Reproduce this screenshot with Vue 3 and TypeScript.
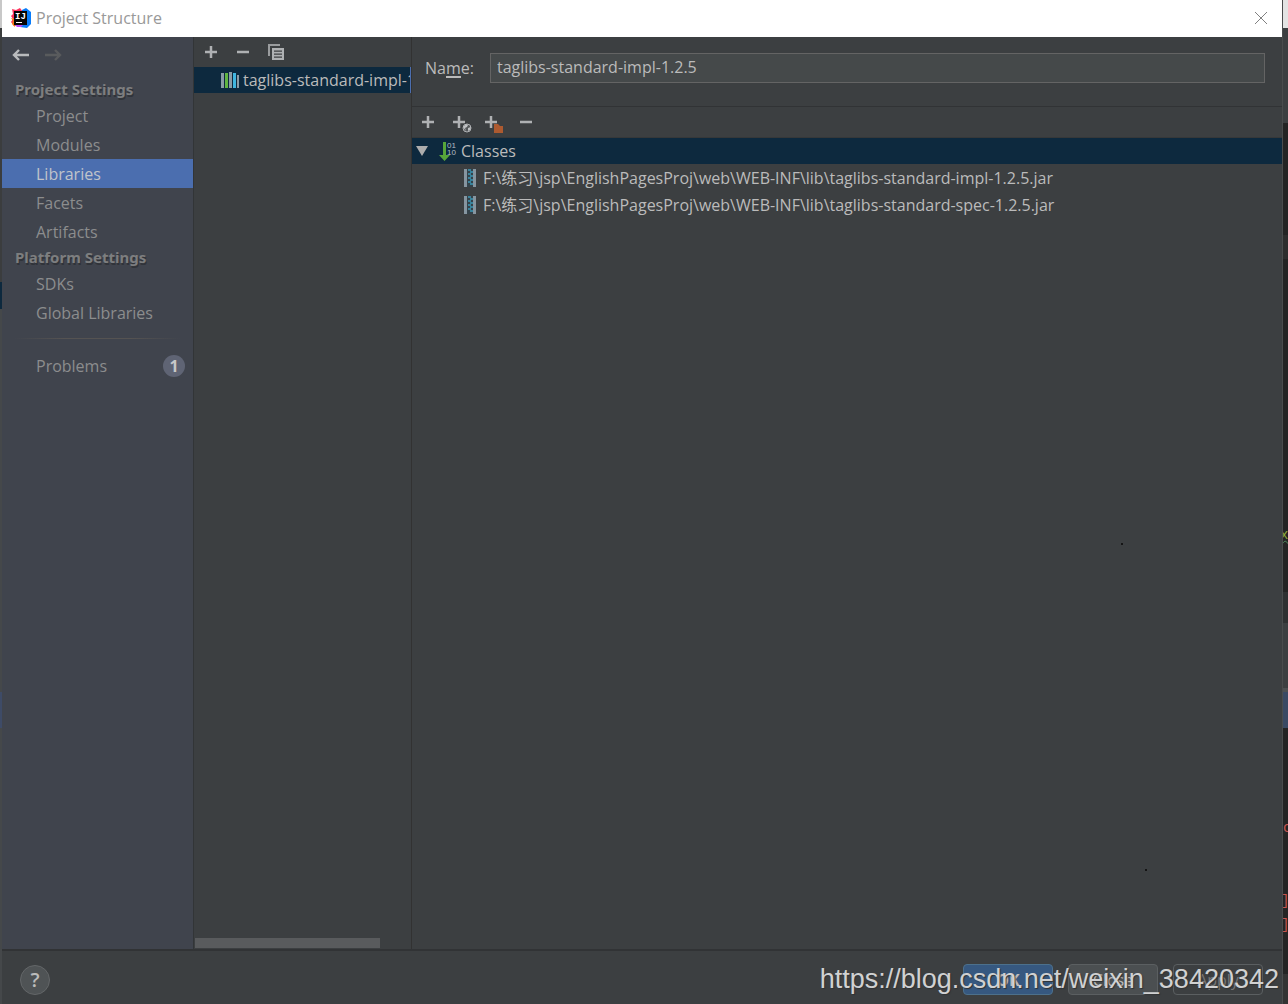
<script setup lang="ts">
import { ref } from 'vue'

interface NavGroup {
  title: string
  items: string[]
}

const groups: NavGroup[] = [
  { title: 'Project Settings', items: ['Project', 'Modules', 'Libraries', 'Facets', 'Artifacts'] },
  { title: 'Platform Settings', items: ['SDKs', 'Global Libraries'] },
]
const active = ref('Libraries')
const name = ref('taglibs-standard-impl-1.2.5')
const root = 'F:\\练习\\jsp\\EnglishPagesProj\\web\\WEB-INF\\lib\\'
const jars: string[] = ['taglibs-standard-impl-1.2.5.jar', 'taglibs-standard-spec-1.2.5.jar']
const zipRows: number[] = [0, 1, 2, 3, 4, 5, 6, 7]
</script>

<template>
  <div class="desktop">
    <div class="edge edge-left"></div>
    <main class="dialog">
      <header class="titlebar">
        <svg class="logo" width="20" height="20" viewBox="0 0 20 20" aria-hidden="true">
          <path d="M1 1l4 1 4-2 3 4-3 13-6 1L0 14l2-3-2-3 2-2z" fill="#fe315d" />
          <path d="M0 10l4 1v8L1 16l1-3z" fill="#f97a12" />
          <path d="M11 2 15 0l5 4v12l-4 4-7-1z" fill="#087cfa" />
          <path d="M4 17h8l-2 2H6z" fill="#b74af7" />
          <rect x="3" y="3" width="13" height="14" fill="#050505" />
          <text x="4" y="11" font-family="Liberation Mono, monospace" font-size="9" font-weight="700" fill="#fff">IJ</text>
          <path d="M5 14.500h6" stroke="#fff" />
        </svg>
        <h1>Project Structure</h1>
        <button class="close" aria-label="Close window">
          <svg width="12" height="12" viewBox="0 0 12 12"><path d="M0 0 12 12M12 0 0 12" stroke="#808080" /></svg>
        </button>
      </header>

      <div class="body">
        <nav class="sidebar">
          <div class="history">
            <button aria-label="Back">
              <svg width="18" height="14" viewBox="0 0 18 14"><path d="M17 7H2M7 2 2 7l5 5" fill="none" stroke="#b9bbbd" stroke-width="2.400" /></svg>
            </button>
            <button aria-label="Forward" disabled>
              <svg width="18" height="14" viewBox="0 0 18 14"><path d="M0 7h15M10 2l5 5-5 5" fill="none" stroke="#595b5d" stroke-width="2.400" /></svg>
            </button>
          </div>
          <section v-for="g in groups" :key="g.title">
            <h2>{{ g.title }}</h2>
            <a v-for="i in g.items" :key="i" href="#" :class="{ active: i === active }" @click.prevent="active = i">{{ i }}</a>
          </section>
          <hr />
          <a href="#" class="problems" @click.prevent="active = 'Problems'">Problems<span class="badge">1</span></a>
        </nav>

        <section class="libraries">
          <div class="tools">
            <button aria-label="Add library">
              <svg width="14" height="14" viewBox="0 0 14 14"><path d="M7 1v12M1 7h12" stroke="#afb1b3" stroke-width="2.500" /></svg>
            </button>
            <button aria-label="Remove library">
              <svg width="14" height="14" viewBox="0 0 14 14"><path d="M1 7h12" stroke="#afb1b3" stroke-width="2.500" /></svg>
            </button>
            <button aria-label="Copy library">
              <svg width="16" height="16" viewBox="0 0 16 16">
                <path d="M1 12V1h11" fill="none" stroke="#9a9c9e" stroke-width="2" />
                <path d="M4 4h12v12H4zM6 6.500v1.300h8v-1.300zM6 9.500v1.300h8v-1.300zM6 12.500v1.300h8v-1.300z" fill="#afb1b3" fill-rule="evenodd" />
              </svg>
            </button>
          </div>
          <div class="library">
            <svg width="18" height="18" viewBox="0 0 18 18" aria-hidden="true">
              <path d="M0 2h3v15H0zM8 1h3v16H8zM16 4h2v13h-2z" fill="#8b9ba6" />
              <path d="M4 2h3v15H4z" fill="#62b543" />
              <path d="M12 2h3v15h-3z" fill="#40b6e0" />
            </svg>
            <span>{{ name }}</span>
          </div>
          <div class="scrollbar"></div>
        </section>

        <section class="detail">
          <div class="form">
            <label for="library-name">Na<span class="mnemonic">m</span>e:</label>
            <input id="library-name" v-model="name" type="text" />
          </div>
          <div class="tools roots">
            <button aria-label="Add">
              <svg width="14" height="14" viewBox="0 0 14 14"><path d="M7 1v12M1 7h12" stroke="#afb1b3" stroke-width="2.500" /></svg>
            </button>
            <button class="badged" aria-label="Specify documentation URL">
              <svg width="20" height="18" viewBox="0 0 20 18">
                <path d="M7 1v12M1 7h12" stroke="#afb1b3" stroke-width="2.500" />
                <circle cx="15" cy="13" r="5" fill="#3c3f41" />
                <circle cx="15" cy="13" r="4" fill="#55585a" stroke="#afb1b3" />
                <path d="M11 12l3-3 2 1-1 2-2 1 1 3zM16 13l3-1-1 3-2 1z" fill="#bfc1c3" />
              </svg>
            </button>
            <button class="badged" aria-label="Exclude">
              <svg width="20" height="18" viewBox="0 0 20 18">
                <path d="M7 1v12M1 7h12" stroke="#afb1b3" stroke-width="2.500" />
                <path d="M10 9h4l2 2h3v7h-9z" fill="#ad5a30" />
              </svg>
            </button>
            <button aria-label="Remove">
              <svg width="20" height="14" viewBox="-3 0 20 14"><path d="M1 7h12" stroke="#afb1b3" stroke-width="2.500" /></svg>
            </button>
          </div>
          <ul class="tree">
            <li class="classes">
              <svg width="12" height="10" viewBox="0 0 12 10" aria-hidden="true"><path d="M0 0h12L6 10z" fill="#adadad" /></svg>
              <svg class="binary" width="18" height="20" viewBox="0 0 18 20" aria-hidden="true">
                <path d="M4 1h3v13h4l-5.500 6L0 14h4z" fill="#57a63a" />
                <g fill="#b4bcc3" font-family="Liberation Sans, sans-serif" font-size="8">
                  <text x="8" y="7">01</text>
                  <text x="8" y="14">10</text>
                </g>
              </svg>
              <span>Classes</span>
            </li>
            <li v-for="j in jars" :key="j" class="jar">
              <svg width="12" height="18" viewBox="0 0 12 18" aria-hidden="true">
                <path d="M0 0h3v18H0zM9 0h3v18H9z" fill="#8695a0" />
                <path d="M3 0h6v18H3z" fill="#34424a" />
                <path v-for="r in zipRows" :key="r" :d="`M${r % 2 ? 6 : 4} ${r * 2 + 1}h3`" stroke="#3fa7c9" stroke-width="1.300" />
              </svg>
              <span>{{ root }}{{ j }}</span>
            </li>
          </ul>
          <i class="speck speck-upper"></i>
          <i class="speck speck-lower"></i>
        </section>
      </div>

      <footer>
        <button class="help" aria-label="Help">?</button>
        <div class="actions">
          <button class="primary">OK</button>
          <button>Close</button>
          <button class="disabled" disabled>Apply</button>
        </div>
        <span class="watermark">https://blog.csdn.net/weixin_38420342</span>
      </footer>
    </main>
    <div class="edge edge-right">
      <span class="code code-green">x</span>
      <span class="code code-name">c</span>
      <span class="code code-bracket">]</span>
      <span class="code code-bracket-last">]</span>
    </div>
  </div>
</template>

<style>
body {
  margin: 0;
  background: #2b2b2b;
}
</style>

<style scoped>
* {
  box-sizing: border-box;
}
.desktop {
  display: grid;
  grid-template-columns: 2px minmax(0, 1fr) 6px;
  min-height: 100vh;
  font: 16px/24px 'Open Sans', 'Noto Sans CJK SC', sans-serif;
  color: #bbb;
}
.edge-left {
  background: linear-gradient(#c8c8c8 28px, #3b3d3e 28px 282px, #0d293e 282px 309px, #45484a 309px 692px, #3e4b67 692px 728px, #45484a 728px);
}
.edge-right {
  position: relative;
  overflow: hidden;
  border-left: 1px solid #4a4c4d;
  background: linear-gradient(#e4e4e4 28px, #3c3f41 28px 123px, #242424 123px 235px, #2d2d2d 235px 259px, #242424 259px 592px, #2f3132 592px 623px, #3c3f41 623px 688px, #4d5052 688px 692px, #3a4963 692px 728px, #242424 728px 974px, #333 974px);
}
.code {
  position: absolute;
  left: 0;
  color: #c75450;
  font: 14px/16px 'Liberation Mono', monospace;
}
.code-green {
  top: 527px;
  left: -3px;
  color: #8ea63c;
  text-decoration: underline wavy #4f8a5c 1px;
}
.code-name {
  top: 820px;
}
.code-bracket {
  top: 893px;
  left: -2px;
}
.code-bracket-last {
  top: 917px;
  left: -2px;
}
.dialog {
  display: flex;
  flex-direction: column;
  background: #3c3f41;
}
button {
  display: flex;
  align-items: center;
  justify-content: center;
  padding: 0;
  border: 0;
  background: none;
  color: inherit;
  font: inherit;
}
svg {
  display: block;
  flex: none;
}
.titlebar {
  display: flex;
  align-items: center;
  height: 37px;
  padding: 0 15px 2px 9px;
  background: #fff;
}
h1 {
  flex: 1;
  margin: 0 0 0 5px;
  color: #999;
  font-size: 16px;
  font-weight: 400;
}
.body {
  display: flex;
  flex: 1;
}
.sidebar {
  flex: none;
  width: 192px;
  border-right: 1px solid #323537;
  background: #40444d;
  color: #8c8d8e;
}
.history {
  display: flex;
  gap: 15px;
  height: 41px;
  padding: 11px 10px 16px;
}
h2 {
  margin: 0;
  padding-left: 13px;
  color: #7d7e7f;
  font-family: 'Noto Sans', sans-serif;
  font-size: 15px;
  line-height: 23px;
  text-shadow: 1px 2px 0 #303339;
}
.sidebar a {
  display: flex;
  align-items: center;
  height: 29px;
  padding: 0 8px 0 34px;
  color: inherit;
  text-decoration: none;
}
.sidebar a.active {
  background: #4b6eaf;
  color: #c0c4cb;
}
hr {
  height: 1px;
  margin: 11px 12px 12px;
  border: 0;
  background: linear-gradient(90deg, transparent, #555352 30%, #555352 70%, transparent);
}
.badge {
  width: 22px;
  height: 22px;
  margin-left: auto;
  border-radius: 50%;
  background: #5f6474;
  color: #c8c8c8;
  font-weight: 700;
  line-height: 22px;
  text-align: center;
}
.libraries {
  display: flex;
  flex: none;
  flex-direction: column;
  width: 218px;
  border-right: 1px solid #323232;
}
.tools {
  display: flex;
  align-items: center;
  gap: 18px;
  height: 30px;
  padding-left: 10px;
}
.library {
  display: flex;
  align-items: center;
  gap: 4px;
  height: 26px;
  padding-left: 27px;
  border-right: 1px solid #4b6eaf;
  background: #0d293e;
  overflow: hidden;
  white-space: nowrap;
}
.scrollbar {
  width: 185px;
  height: 10px;
  margin: auto 0 1px 1px;
  background: #595b5d;
}
.detail {
  position: relative;
  flex: 1;
  min-width: 0;
}
.form {
  display: flex;
  align-items: center;
  gap: 16px;
  height: 70px;
  padding: 0 17px 8px 13px;
  border-bottom: 1px solid #313335;
}
.mnemonic {
  display: inline-block;
  border-bottom: 2px solid #bbb;
  line-height: 16px;
}
input {
  flex: 1;
  min-width: 0;
  height: 30px;
  padding: 0 6px 2px;
  border: 1px solid #646464;
  background: #45494a;
  color: #bbb;
  font: inherit;
}
.roots {
  gap: 17px;
  height: 31px;
  padding-left: 9px;
  border-bottom: 1px solid #363839;
}
.badged {
  margin: 4px -5px 0 0;
}
.tree {
  margin: 0;
  padding: 0;
  list-style: none;
}
.tree li {
  display: flex;
  align-items: center;
  height: 27px;
  white-space: nowrap;
}
.tree .classes {
  height: 26px;
  padding-left: 4px;
  background: #0d293e;
}
.binary {
  margin: 0 4px 0 11px;
}
.tree .jar {
  gap: 7px;
  padding-left: 52px;
}
.speck {
  position: absolute;
  width: 2px;
  height: 2px;
  background: #151515;
}
.speck-upper {
  top: 506px;
  right: 159px;
}
.speck-lower {
  top: 832px;
  right: 135px;
}
footer {
  position: relative;
  display: flex;
  align-items: center;
  justify-content: space-between;
  height: 55px;
  padding: 4px 19px 0 18px;
  border-top: 2px solid #313335;
}
.help {
  width: 30px;
  height: 30px;
  border: 1px solid #636668;
  border-radius: 50%;
  background: #4f5355;
  font-size: 20px;
  font-weight: 600;
}
.actions {
  display: flex;
  gap: 15px;
}
.actions button {
  width: 90px;
  height: 31px;
  border: 1px solid #5b5f61;
  border-radius: 4px;
  background: #4b4f51;
}
.actions .primary {
  border-color: #4c708c;
  background: #365880;
  font-weight: 700;
}
.actions .disabled {
  background: #3c3f41;
  color: #777;
}
.watermark {
  position: absolute;
  right: 3px;
  bottom: 9px;
  color: #d0d1d2;
  font: 27px/32px 'Liberation Sans', sans-serif;
  text-shadow: 1px 1px 1px #303234;
  pointer-events: none;
}
</style>
